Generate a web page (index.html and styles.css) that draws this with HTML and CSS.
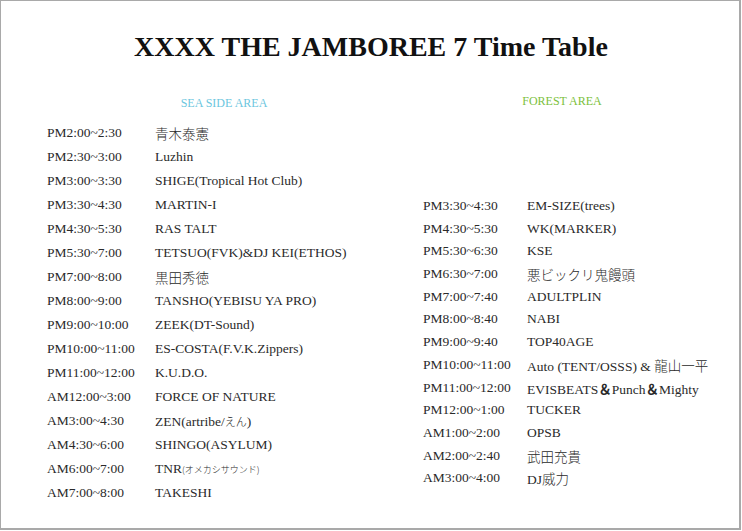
FILE: index.html
```html
<!DOCTYPE html>
<html lang="ja">
<head>
<meta charset="utf-8">
<title>XXXX THE JAMBOREE 7 Time Table</title>
<link rel="stylesheet" href="styles.css">
</head>
<body>
<div class="page">
  <h1 class="title">XXXX THE JAMBOREE 7 Time Table</h1>
  <div class="columns">
    <section class="area area-sea">
      <h2 class="area-head head-sea">SEA SIDE AREA</h2>
      <div class="slots slots-sea">
        <span class="time">PM2:00~2:30</span><span class="act ja">青木泰憲</span>
        <span class="time">PM2:30~3:00</span><span class="act">Luzhin</span>
        <span class="time">PM3:00~3:30</span><span class="act">SHIGE(Tropical Hot Club)</span>
        <span class="time">PM3:30~4:30</span><span class="act">MARTIN-I</span>
        <span class="time">PM4:30~5:30</span><span class="act">RAS TALT</span>
        <span class="time">PM5:30~7:00</span><span class="act">TETSUO(FVK)&amp;DJ KEI(ETHOS)</span>
        <span class="time">PM7:00~8:00</span><span class="act ja">黒田秀徳</span>
        <span class="time">PM8:00~9:00</span><span class="act">TANSHO(YEBISU YA PRO)</span>
        <span class="time">PM9:00~10:00</span><span class="act">ZEEK(DT-Sound)</span>
        <span class="time">PM10:00~11:00</span><span class="act">ES-COSTA(F.V.K.Zippers)</span>
        <span class="time">PM11:00~12:00</span><span class="act">K.U.D.O.</span>
        <span class="time">AM12:00~3:00</span><span class="act">FORCE OF NATURE</span>
        <span class="time">AM3:00~4:30</span><span class="act">ZEN(artribe/<span class="kana">えん</span>)</span>
        <span class="time">AM4:30~6:00</span><span class="act">SHINGO(ASYLUM)</span>
        <span class="time">AM6:00~7:00</span><span class="act">TNR<span class="tiny">(オメカシサウンド)</span></span>
        <span class="time">AM7:00~8:00</span><span class="act">TAKESHI</span>
      </div>
    </section>
    <section class="area area-forest">
      <h2 class="area-head head-forest">FOREST AREA</h2>
      <div class="slots slots-forest">
        <span class="time">PM3:30~4:30</span><span class="act">EM-SIZE(trees)</span>
        <span class="time">PM4:30~5:30</span><span class="act">WK(MARKER)</span>
        <span class="time">PM5:30~6:30</span><span class="act">KSE</span>
        <span class="time">PM6:30~7:00</span><span class="act ja">悪ビックリ鬼饅頭</span>
        <span class="time">PM7:00~7:40</span><span class="act">ADULTPLIN</span>
        <span class="time">PM8:00~8:40</span><span class="act">NABI</span>
        <span class="time">PM9:00~9:40</span><span class="act">TOP40AGE</span>
        <span class="time">PM10:00~11:00</span><span class="act">Auto (TENT/OSSS) &amp; <span class="ja">龍山一平</span></span>
        <span class="time">PM11:00~12:00</span><span class="act">EVISBEATS<span class="amp">＆</span>Punch<span class="amp">＆</span>Mighty</span>
        <span class="time">PM12:00~1:00</span><span class="act">TUCKER</span>
        <span class="time">AM1:00~2:00</span><span class="act">OPSB</span>
        <span class="time">AM2:00~2:40</span><span class="act ja">武田充貴</span>
        <span class="time">AM3:00~4:00</span><span class="act">DJ<span class="ja">威力</span></span>
      </div>
    </section>
  </div>
</div>
</body>
</html>
```
FILE: styles.css
```css
html, body {
  margin: 0;
  padding: 0;
  background: #ffffff;
}

.page {
  box-sizing: border-box;
  width: 741px;
  height: 530px;
  border: 1px solid #a9a9a9;
  border-right-width: 2px;
  border-bottom-width: 2px;
  font-family: "Liberation Serif", "Noto Sans CJK JP", serif;
  color: #2a2a2a;
  overflow: hidden;
}

.title {
  margin: 30px 0 0 0;
  text-align: center;
  font-size: 28px;
  line-height: 32px;
  font-weight: bold;
  color: #111111;
  padding-left: 2px;
}

.columns {
  display: grid;
  grid-template-columns: 376px 1fr;
  padding-left: 46px;
  margin-top: 30px;
}

.area-head {
  margin: 0;
  font-size: 12px;
  line-height: 20px;
  font-weight: normal;
  text-align: center;
}

.head-sea {
  width: 354px;
  color: #6cc6de;
}

.head-forest {
  width: 278px;
  color: #7cbf3c;
  margin-top: -2px;
}

.slots {
  display: grid;
  font-size: 13.5px;
  white-space: nowrap;
}

.slots-sea {
  grid-template-columns: 108px 1fr;
  grid-auto-rows: 24px;
  line-height: 24px;
  margin-top: 8px;
}

.slots-forest {
  grid-template-columns: 104px 1fr;
  grid-auto-rows: 22.7px;
  line-height: 22.7px;
  margin-top: 84px;
}

.ja {
  font-family: "Noto Sans CJK JP", sans-serif;
  font-size: 13.5px;
  font-weight: 300;
}

.kana {
  font-family: "Noto Sans CJK JP", sans-serif;
  font-size: 11px;
  font-weight: 300;
}

.tiny {
  font-family: "Noto Sans CJK JP", sans-serif;
  font-size: 9px;
  font-weight: 300;
}

.amp {
  font-family: "Noto Sans CJK JP", sans-serif;
  font-weight: bold;
  font-size: 13.5px;
}
```
